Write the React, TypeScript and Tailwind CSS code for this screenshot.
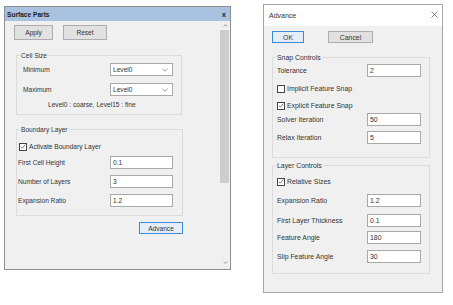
import React from "react";

function Check({ checked }: { checked: boolean }) {
  return (
    <div className="w-[8px] h-[8px] border border-[#444444] bg-white flex items-center justify-center shrink-0">
      {checked && (
        <svg width="7" height="7" viewBox="0 0 8 8">
          <path d="M1.2 4.2 L3.1 6.2 L6.9 1.6" fill="none" stroke="#333333" strokeWidth="0.9" />
        </svg>
      )}
    </div>
  );
}

function Chevron() {
  return (
    <svg width="6" height="4" viewBox="0 0 6 4">
      <path d="M0.5 0.8 L3 3.2 L5.5 0.8" fill="none" stroke="#6a6a6a" strokeWidth="0.7" />
    </svg>
  );
}

function Field({ value, w }: { value: string; w: string }) {
  return (
    <div className={"h-[13px] border border-[#a9a9a9] bg-white flex items-center pl-[2px] shrink-0 " + w}>
      {value}
    </div>
  );
}

function Select({ value }: { value: string }) {
  return (
    <div className="h-[13px] w-[63px] border border-[#a9a9a9] bg-white flex items-center justify-between pl-[2px] pr-[4px] shrink-0">
      <span>{value}</span>
      <Chevron />
    </div>
  );
}

function Legend({ children }: { children: React.ReactNode }) {
  return <div className="-mt-[5px] ml-[3px] w-fit px-[1px] bg-[#f0f0f0] leading-[9px] h-[9px]">{children}</div>;
}

export default function App() {
  return (
    <div className="w-[453px] h-[305px] bg-white flex items-start pl-[4px] pt-[4px] font-['Liberation_Sans',Arial,sans-serif] text-[6.6px] text-[#333333] leading-[9px]">
      {/* Left window */}
      <div className="mt-[2px] w-[227px] h-[264px] border border-[#8e8e8e] bg-[#f0f0f0] flex flex-col shrink-0">
        <div className="h-[14px] bg-[#a9c2df] flex items-center justify-between pl-[2px] pr-[4px] shrink-0">
          <span className="font-bold text-[#1a1a1a]">Surface Parts</span>
          <span className="font-bold text-[7px] text-[#222]">x</span>
        </div>
        <div className="flex flex-1 min-h-0">
          <div className="flex-1 flex flex-col">
            <div className="flex mt-[4px] ml-[9px]">
              <div className="w-[39px] h-[15px] bg-[#e1e1e1] border border-[#adadad] flex items-center justify-center">Apply</div>
              <div className="ml-[10px] w-[44px] h-[15px] bg-[#e1e1e1] border border-[#adadad] flex items-center justify-center">Reset</div>
            </div>

            <div className="mt-[15px] ml-[11px] w-[166px] h-[60px] border border-[#dcdcdc] flex flex-col">
              <Legend>Cell Size</Legend>
              <div className="flex items-center mt-[3px]">
                <div className="w-[93px] pl-[6px]">Minimum</div>
                <Select value="Level0" />
              </div>
              <div className="flex items-center mt-[7px]">
                <div className="w-[93px] pl-[6px]">Maximum</div>
                <Select value="Level0" />
              </div>
              <div className="mt-[4px] pl-[31px]">Level0 : coarse, Level15 : fine</div>
            </div>

            <div className="mt-[14px] ml-[11px] w-[167px] h-[87px] border border-[#dcdcdc] flex flex-col">
              <Legend>Boundary Layer</Legend>
              <div className="flex items-center mt-[8px] pl-[2px] gap-[2px] h-[9px]">
                <Check checked />
                <span>Activate Boundary Layer</span>
              </div>
              <div className="flex items-center mt-[5px]">
                <div className="w-[93px] pl-[1px]">First Cell Height</div>
                <Field value="0.1" w="w-[63px]" />
              </div>
              <div className="flex items-center mt-[6px]">
                <div className="w-[93px] pl-[1px]">Number of Layers</div>
                <Field value="3" w="w-[63px]" />
              </div>
              <div className="flex items-center mt-[6px]">
                <div className="w-[93px] pl-[1px]">Expansion Ratio</div>
                <Field value="1.2" w="w-[63px]" />
              </div>
            </div>

            <div className="mt-[6px] ml-[134px] w-[44px] h-[12px] bg-[#e5eef7] border border-[#3d8ad6] flex items-center justify-center">Advance</div>
          </div>

          {/* scrollbar */}
          <div className="w-[12px] flex flex-col bg-[#f0f0f0]">
            <div className="h-[9px] flex items-center justify-center pl-[2px]">
              <svg width="5" height="3" viewBox="0 0 6 4">
                <path d="M0.5 3.2 L3 0.8 L5.5 3.2" fill="none" stroke="#606060" strokeWidth="0.8" />
              </svg>
            </div>
            <div className="ml-[2px] w-[9px] h-[153px] bg-[#cdcdcd]"></div>
            <div className="flex-1"></div>
            <div className="h-[9px] mb-[2px] flex items-center justify-center pl-[2px]">
              <svg width="5" height="3" viewBox="0 0 6 4">
                <path d="M0.5 0.8 L3 3.2 L5.5 0.8" fill="none" stroke="#606060" strokeWidth="0.8" />
              </svg>
            </div>
          </div>
        </div>
      </div>

      {/* Right window */}
      <div className="ml-[32px] w-[180px] h-[289px] border border-[#a5a5a5] bg-[#f0f0f0] flex flex-col shrink-0 text-[6.9px]">
        <div className="h-[21px] bg-white flex items-center justify-between pl-[5px] pr-[4px] shrink-0">
          <span className="text-[7px] text-[#333]">Advance</span>
          <svg width="7" height="7" viewBox="0 0 7 7" className="-mt-[3px]">
            <path d="M0.5 0.5 L6.5 6.5 M6.5 0.5 L0.5 6.5" stroke="#555" strokeWidth="0.7" />
          </svg>
        </div>
        <div className="flex mt-[5px] ml-[8px]">
          <div className="w-[32px] h-[12px] bg-[#e5eef7] border border-[#3d8ad6] flex items-center justify-center">OK</div>
          <div className="ml-[24px] w-[45px] h-[12px] bg-[#e1e1e1] border border-[#adadad] flex items-center justify-center">Cancel</div>
        </div>

        <div className="mt-[14px] ml-[8px] w-[158px] h-[101px] border border-[#dcdcdc] flex flex-col">
          <Legend>Snap Controls</Legend>
          <div className="flex items-center mt-[2px]">
            <div className="w-[94px] pl-[4px]">Tolerance</div>
            <Field value="2" w="w-[54px]" />
          </div>
          <div className="flex items-center mt-[7px] pl-[4px] gap-[2px] h-[9px]">
            <Check checked={false} />
            <span>Implicit Feature Snap</span>
          </div>
          <div className="flex items-center mt-[8px] pl-[4px] gap-[2px] h-[9px]">
            <Check checked />
            <span>Explicit Feature Snap</span>
          </div>
          <div className="flex items-center mt-[3px]">
            <div className="w-[94px] pl-[4px]">Solver Iteration</div>
            <Field value="50" w="w-[54px]" />
          </div>
          <div className="flex items-center mt-[5px]">
            <div className="w-[94px] pl-[4px]">Relax Iteration</div>
            <Field value="5" w="w-[54px]" />
          </div>
        </div>

        <div className="mt-[7px] ml-[8px] w-[158px] h-[109px] border border-[#dcdcdc] flex flex-col">
          <Legend>Layer Controls</Legend>
          <div className="flex items-center mt-[7px] pl-[4px] gap-[2px] h-[9px]">
            <Check checked />
            <span>Relative Sizes</span>
          </div>
          <div className="flex items-center mt-[8px]">
            <div className="w-[94px] pl-[4px]">Expansion Ratio</div>
            <Field value="1.2" w="w-[54px]" />
          </div>
          <div className="flex items-center mt-[7px]">
            <div className="w-[94px] pl-[4px]">First Layer Thickness</div>
            <Field value="0.1" w="w-[54px]" />
          </div>
          <div className="flex items-center mt-[4px]">
            <div className="w-[94px] pl-[4px]">Feature Angle</div>
            <Field value="180" w="w-[54px]" />
          </div>
          <div className="flex items-center mt-[6px]">
            <div className="w-[94px] pl-[4px]">Slip Feature Angle</div>
            <Field value="30" w="w-[54px]" />
          </div>
        </div>
      </div>
    </div>
  );
}
